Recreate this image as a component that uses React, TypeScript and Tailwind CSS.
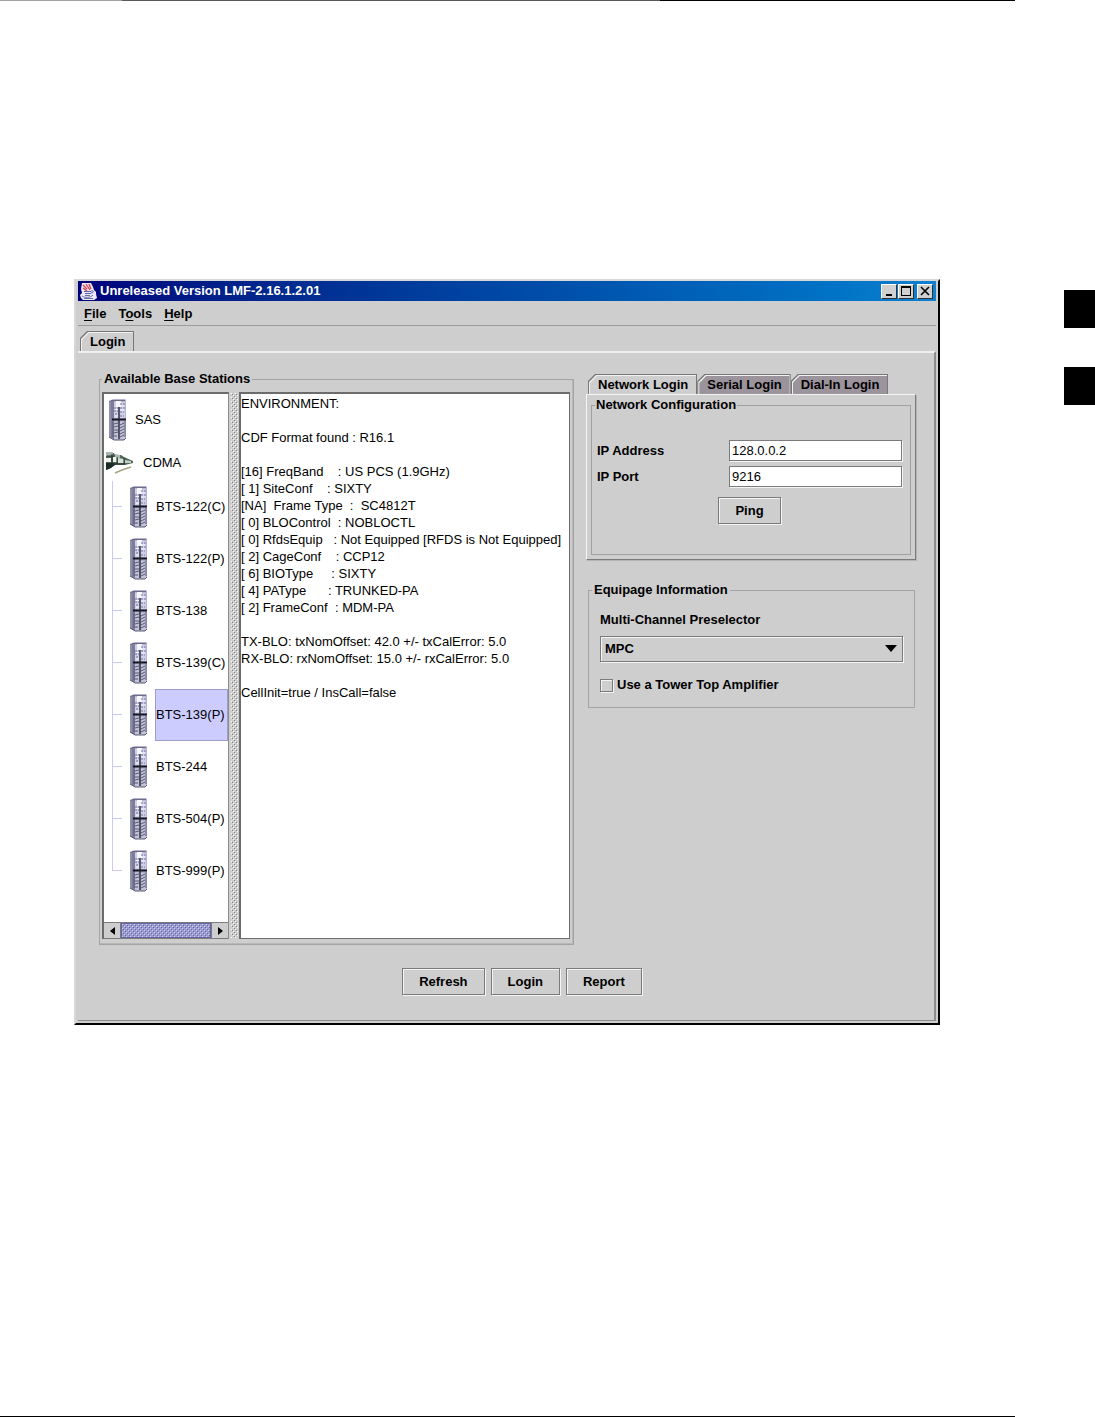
import React, { useState } from 'react';

interface Station {
  name: string;
}

const STATIONS: Station[] = [
  { name: 'BTS-122(C)' },
  { name: 'BTS-122(P)' },
  { name: 'BTS-138' },
  { name: 'BTS-139(C)' },
  { name: 'BTS-139(P)' },
  { name: 'BTS-244' },
  { name: 'BTS-504(P)' },
  { name: 'BTS-999(P)' },
];

const LOGIN_TABS = ['Network Login', 'Serial Login', 'Dial-In Login'];

const ENVIRONMENT = `ENVIRONMENT:

CDF Format found : R16.1

[16] FreqBand    : US PCS (1.9GHz)
[ 1] SiteConf    : SIXTY
[NA]  Frame Type  :  SC4812T
[ 0] BLOControl  : NOBLOCTL
[ 0] RfdsEquip   : Not Equipped [RFDS is Not Equipped]
[ 2] CageConf    : CCP12
[ 6] BIOType     : SIXTY
[ 4] PAType      : TRUNKED-PA
[ 2] FrameConf  : MDM-PA

TX-BLO: txNomOffset: 42.0 +/- txCalError: 5.0
RX-BLO: rxNomOffset: 15.0 +/- rxCalError: 5.0

CellInit=true / InsCall=false`;

function JavaIcon() {
  return (
    <svg width="17" height="17" viewBox="0 0 17 17" aria-hidden="true">
      <path d="M2 0h9l2 4 1 3 2 2v2l1 4-3 2H3l-2-2-1-3 2-2-1-4z" fill="#ece8f6" />
      <path d="M3 2l4 4M6 1l4 6M9 1l2 5M3 5l4 3" fill="none" stroke="#d8404c" strokeWidth="1.3" />
      <path d="M4 8.500h7M5 10.500h6M11 8c3-1 3 2 0 2" fill="none" stroke="#5664b4" />
      <path d="M2 13c3 2 8 2 11-1M5 12.500h5M4 15.500h9" fill="none" stroke="#6a6ca8" />
    </svg>
  );
}

function CabinetIcon() {
  return (
    <svg width="19" height="44" viewBox="0 0 19 44" className="shrink-0" aria-hidden="true">
      <path d="M1 3l4-2h12l1 1v38l-2 2H6l-5-3z" fill="#b4b4d2" />
      <path d="M1 3l5-1v40l-5-3z" fill="#7c7c96" />
      <path d="M2 4v35" stroke="#a2a2bc" />
      <path d="M3 2.500h14" stroke="#6c6c84" />
      <path d="M6 4h11v16H6z" fill="#cfcfea" />
      <path d="M8 3h5v6H8z" fill="#f6f6ff" />
      <path d="M6 10h4M12 6h5M6 13h4M12 10h5M7 16h3M12 14h4M12 18h4" stroke="#6e709a" strokeDasharray="2 1" />
      <path d="M12 8h4M7 11.500h3M12 12h4M7 18h3" stroke="#f6f6ff" />
      <path d="M6 24h11v17H6z" fill="#c3c3dc" />
      <path d="M6 26l4-1M12 27l4-2M6 29l4-1M12 30l4-2M6 32h4M12 33l4-2M6 35l4-1M12 36l4-2M6 38h3M12 39l4-2" stroke="#55556e" />
      <path d="M4 21.500h14" stroke="#15151f" strokeWidth="2" />
      <path d="M11 9v32" stroke="#23232f" strokeWidth="1.4" />
      <path d="M17 22v17M5 24v15" stroke="#5a5a72" />
      <path d="M1 39l5 3h10l2-2" fill="none" stroke="#5f5f72" />
    </svg>
  );
}

function NetworkIcon() {
  return (
    <svg width="28" height="22" viewBox="0 0 28 22" className="shrink-0" aria-hidden="true">
      <path d="M0 1h8l1 2h6l3 2 9 4v2l-8 2H9l-6 4-3 1z" fill="#52665a" />
      <path d="M0 0h7v4H0zM9 2l5 1v3H9z" fill="#a9b8ae" />
      <path d="M0 6h5v4H0zM7 5h4v5H7z" fill="#eff4ef" />
      <path d="M12 6l6 1v4h-6z" fill="#d7e2da" />
      <path d="M19 8l6 1v2h-6z" fill="#c3ccc4" />
      <path d="M0 11h7l3 1-5 4-5 2z" fill="#1d2c24" />
      <path d="M1 4h7M6 2v10M11 5v7M18 6v6M7 12h12" stroke="#20302a" />
      <path d="M9 21l7-3 9-3" fill="none" stroke="#a8a681" strokeWidth="1.6" />
    </svg>
  );
}

// The raised dots on split bars and scroll thumbs
function Bumps({ id, light, dark }: { id: string; light: string; dark: string }) {
  return (
    <svg className="block h-full w-full" shapeRendering="crispEdges" aria-hidden="true">
      <defs>
        <pattern id={id} width="4" height="4" patternUnits="userSpaceOnUse">
          <path d="M0 0h1v1H0zM2 2h1v1H2z" fill={light} />
          <path d="M1 1h1v1H1zM3 3h1v1H3z" fill={dark} />
        </pattern>
      </defs>
      <rect width="100%" height="100%" fill={`url(#${id})`} />
    </svg>
  );
}

function MetalButton({ children }: { children: React.ReactNode }) {
  return (
    <button
      type="button"
      className="h-[27px] border border-[#7b7b7b] px-4 shadow-[inset_1px_1px_0_#f4f4f4,1px_1px_0_#f4f4f4]"
    >
      {children}
    </button>
  );
}

const TAB_SHAPE = '[clip-path:polygon(7px_0,100%_0,100%_100%,0_100%,0_7px)]';

function Tab({ label, active, onClick }: { label: string; active: boolean; onClick?: () => void }) {
  return (
    <button
      type="button"
      role="tab"
      aria-selected={active}
      onClick={onClick}
      className={`bg-[#777] p-px pb-0 ${TAB_SHAPE}`}
    >
      <span className={`block bg-[#f0f0f0] pt-px pl-px ${TAB_SHAPE}`}>
        <span className={`block h-[18px] px-2 leading-[18px] ${TAB_SHAPE} ${active ? 'bg-[#cecece]' : 'bg-[#9c949c]'}`}>
          {label}
        </span>
      </span>
    </button>
  );
}

function TitleBar() {
  const box = 'flex h-[15px] w-4 items-center justify-center border border-t-white border-l-white border-r-[#303030] border-b-[#303030] bg-[#d0d0d0]';
  return (
    <header className="flex h-5 items-center bg-linear-to-r from-[#00007b] to-[#1080d0] pr-[3px] pl-0.5 text-white">
      <JavaIcon />
      <h1 className="ml-[3px] flex-1">Unreleased Version LMF-2.16.1.2.01</h1>
      <button type="button" aria-label="Minimize" className={box}>
        <svg width="12" height="12" shapeRendering="crispEdges"><path d="M3 9h6v2H3z" fill="#000" /></svg>
      </button>
      <button type="button" aria-label="Maximize" className={`ml-px ${box}`}>
        <svg width="12" height="12" shapeRendering="crispEdges"><path d="M1 1h10v10H1zM2 3v7h8V3z" fillRule="evenodd" fill="#000" /></svg>
      </button>
      <button type="button" aria-label="Close" className={`ml-[3px] ${box}`}>
        <svg width="12" height="12"><path d="M2 2l8 8M10 2l-8 8" stroke="#000" strokeWidth="1.6" /></svg>
      </button>
    </header>
  );
}

function StationTree() {
  const [selected, setSelected] = useState('BTS-139(P)');
  return (
    <div className="flex w-[127px] flex-col border-t-2 border-l-2 border-[#6c6c6c] border-r border-r-[#8c8c8c] bg-white font-normal">
      <div className="flex h-[50px] items-center pt-0.5 pl-1">
        <CabinetIcon />
        <span className="ml-2">SAS</span>
      </div>
      <div className="flex h-9 items-center pt-0.5 pl-0.5">
        <NetworkIcon />
        <span className="ml-[9px]">CDMA</span>
      </div>
      <ul className="flex-1 pt-px">
        {STATIONS.map((s, i) => (
          <li key={s.name} className="flex h-[52px] items-stretch pl-2">
            <div className="flex w-[10px] flex-col">
              <div className="h-[26px] border-b border-l border-[#cacaf2]" />
              {i < STATIONS.length - 1 && <div className="flex-1 border-l border-[#cacaf2]" />}
            </div>
            <button type="button" onClick={() => setSelected(s.name)} className="flex min-w-0 flex-1 items-center pl-[7px] text-left">
              <CabinetIcon />
              <span
                className={
                  selected === s.name
                    ? 'ml-[7px] h-[52px] min-w-0 flex-1 border border-[#9c9cce] bg-[#ccccff] leading-[50px] whitespace-nowrap'
                    : 'ml-[7px] h-[52px] min-w-0 flex-1 border border-transparent leading-[50px] whitespace-nowrap'
                }
              >
                {s.name}
              </span>
            </button>
          </li>
        ))}
      </ul>
      <div className="flex h-[17px] border-y border-[#7b7b7b] bg-[#cecece]">
        <button type="button" aria-label="Scroll left" className="flex w-[17px] items-center justify-center border-r border-[#7b7b7b]">
          <svg width="5" height="8"><path d="M5 0v8L0 4z" /></svg>
        </button>
        <div className="flex-1 border border-[#6464a0] bg-[#9c9cce]">
          <Bumps id="thumb" light="#ccccff" dark="#6666a6" />
        </div>
        <button type="button" aria-label="Scroll right" className="flex w-[17px] items-center justify-center border-l border-[#7b7b7b]">
          <svg width="5" height="8"><path d="M0 0v8l5-4z" /></svg>
        </button>
      </div>
    </div>
  );
}

function BaseStations() {
  return (
    <fieldset className="min-w-0 flex-1 border border-[#a4a4a4] pr-[3px] pb-[5px] pl-0.5 shadow-[inset_-1px_-1px_0_#b8b8b8]">
      <legend className="px-0.5 leading-4">Available Base Stations</legend>
      <div className="mt-[5px] flex h-[547px]">
        <StationTree />
        <div className="w-[10px] py-px pr-px pl-0.5">
          <Bumps id="split" light="#fff" dark="#808080" />
        </div>
        <textarea
          readOnly
          wrap="off"
          aria-label="Station details"
          value={ENVIRONMENT}
          className="block min-w-0 flex-1 resize-none overflow-hidden border-t-2 border-l-2 border-r border-b border-[#6c6c6c] bg-white pt-px font-normal leading-[17px] outline-none"
        />
      </div>
    </fieldset>
  );
}

function NetworkPanel() {
  const field = 'h-[21px] w-[173px] border border-[#7b7b7b] bg-white px-0.5 font-normal shadow-[1px_1px_0_#f4f4f4] outline-none';
  return (
    <div className="border border-t-[#f4f4f4] border-r-[#7b7b7b] border-b-[#7b7b7b] border-l-[#f4f4f4] p-1 pt-0.5 shadow-[1px_1px_0_#b4b4b4]">
      <fieldset className="border border-[#a0a0a0] pr-2 pb-[30px] pl-[5px]">
        <legend className="-ml-0.5 px-px leading-4">Network Configuration</legend>
        <div className="mt-[27px] flex items-center justify-between">
          <label htmlFor="ip">IP Address</label>
          <input id="ip" type="text" defaultValue="128.0.0.2" className={field} />
        </div>
        <div className="mt-[5px] flex items-center justify-between">
          <label htmlFor="port">IP Port</label>
          <input id="port" type="text" defaultValue="9216" className={field} />
        </div>
        <div className="mt-2.5 flex justify-center">
          <MetalButton>Ping</MetalButton>
        </div>
      </fieldset>
    </div>
  );
}

function EquipagePanel() {
  return (
    <fieldset className="mt-[22px] mr-px ml-0.5 border border-[#a4a4a4] px-[11px] pb-3.5">
      <legend className="-ml-2 px-0.5 leading-4">Equipage Information</legend>
      <label htmlFor="preselector" className="mt-3.5 block leading-4">Multi-Channel Preselector</label>
      <div className="relative mt-2">
        <select
          id="preselector"
          className="h-[26px] w-full appearance-none border border-[#7b7b7b] bg-[#cecece] px-1 shadow-[inset_1px_1px_0_#f4f4f4,1px_1px_0_#f4f4f4] outline-none"
        >
          <option>MPC</option>
        </select>
        <svg width="12" height="7" className="pointer-events-none absolute top-[9px] right-1.5">
          <path d="M0 0h12L6 7z" />
        </svg>
      </div>
      <label className="mt-[15px] flex items-center leading-4">
        <input
          type="checkbox"
          className="mr-1 h-[13px] w-[13px] appearance-none border border-[#7b7b7b] shadow-[inset_1px_1px_0_#f4f4f4,1px_1px_0_#f4f4f4] checked:bg-[#666699]"
        />
        Use a Tower Top Amplifier
      </label>
    </fieldset>
  );
}

export default function App() {
  const [loginTab, setLoginTab] = useState('Network Login');

  return (
    <div className="flex min-h-screen flex-col bg-white font-['Liberation_Sans',Arial,sans-serif] text-[13px] font-bold text-black">
      <div className="mr-20 flex h-px">
        <div className="w-[12%] bg-[#a0a0a0]" />
        <div className="w-[53%] bg-[#585858]" />
        <div className="flex-1 bg-black" />
      </div>

      <div className="flex flex-1 items-start pt-[278px]">
        <main className="mr-[124px] ml-[74px] min-w-0 flex-1 border-2 border-t-[#d8d8d8] border-r-black border-b-black border-l-[#d8d8d8] bg-[#cecece] px-0.5 pb-0.5">
          <TitleBar />
          <nav className="flex h-[25px] gap-3 border-b border-[#9a9a9a] pt-px pl-1.5">
            <button type="button"><u className="underline-offset-2">F</u>ile</button>
            <button type="button">T<u className="underline-offset-2">o</u>ols</button>
            <button type="button"><u className="underline-offset-2">H</u>elp</button>
          </nav>
          <div role="tablist" className="flex pt-[5px] pl-0.5">
            <Tab label="Login" active />
          </div>

          <section className="border-t-2 border-r-2 border-b border-t-[#f0f0f0] border-r-[#8c8c8c] border-b-[#8c8c8c] pb-[25px]">
            <div className="flex items-start gap-3 pt-[18px] pr-[18px] pl-[21px]">
              <BaseStations />
              <div className="w-[330px] pt-[3px]">
                <div role="tablist" className="flex pl-0.5">
                  {LOGIN_TABS.map((t) => (
                    <Tab key={t} label={t} active={t === loginTab} onClick={() => setLoginTab(t)} />
                  ))}
                </div>
                <NetworkPanel />
                <EquipagePanel />
              </div>
            </div>
            <div className="mt-[23px] flex justify-center gap-1.5 pl-8">
              <MetalButton>Refresh</MetalButton>
              <MetalButton>Login</MetalButton>
              <MetalButton>Report</MetalButton>
            </div>
          </section>
        </main>

        <aside className="w-[31px] pt-[11px]">
          <div className="h-[38px] bg-black" />
          <div className="mt-[39px] h-[38px] bg-black" />
        </aside>
      </div>

      <div className="mr-20 h-px bg-black" />
    </div>
  );
}
